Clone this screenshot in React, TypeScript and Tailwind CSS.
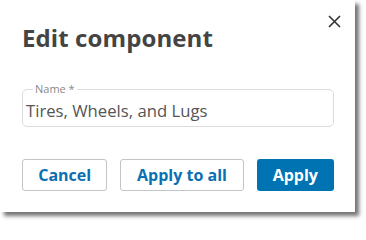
import React from 'react';

export default function App() {
  return (
    <div className="w-[366px] h-[224px] bg-white" style={{ fontFamily: '"Open Sans", sans-serif' }}>
      <div className="relative w-[355px] h-[212px] bg-white shadow-[4px_4px_4px_rgba(0,0,0,0.55)] pl-[22px] pr-[21px] pt-[22px]">
        <button className="absolute left-[328px] top-[15px] w-[13px] h-[13px]" aria-label="Close">
          <svg viewBox="0 0 13 13" className="w-[13px] h-[13px]">
            <path d="M1 1L12 12M12 1L1 12" stroke="#333" strokeWidth="1.6" />
          </svg>
        </button>
        <h1 className="text-[24px] leading-[32px] font-bold text-[#444] tracking-[0.1px]">Edit component</h1>

        <div className="relative mt-[35px] h-[38px] border border-[#dcdcdc] rounded-[5px] pl-[3px] flex items-center">
          <span className="absolute left-[10px] -top-[8px] bg-white px-[2px] text-[11px] leading-[14px] text-[#8a8a8a]">Name *</span>
          <span className="mt-[5px] text-[16.7px] leading-[24px] text-[#555]">Tires, Wheels, and Lugs</span>
        </div>

        <div className="mt-[32px] flex gap-[13px]">
          <button className="w-[86px] h-[32px] border border-[#c4c4c4] rounded-[3px] text-[16px] font-bold text-[#0a70b3]">Cancel</button>
          <button className="w-[124px] h-[32px] border border-[#c4c4c4] rounded-[3px] text-[16px] font-bold text-[#0a70b3]">Apply to all</button>
          <button className="w-[78px] h-[32px] rounded-[3px] bg-[#0073b3] text-[16px] font-bold text-white">Apply</button>
        </div>
      </div>
    </div>
  );
}
